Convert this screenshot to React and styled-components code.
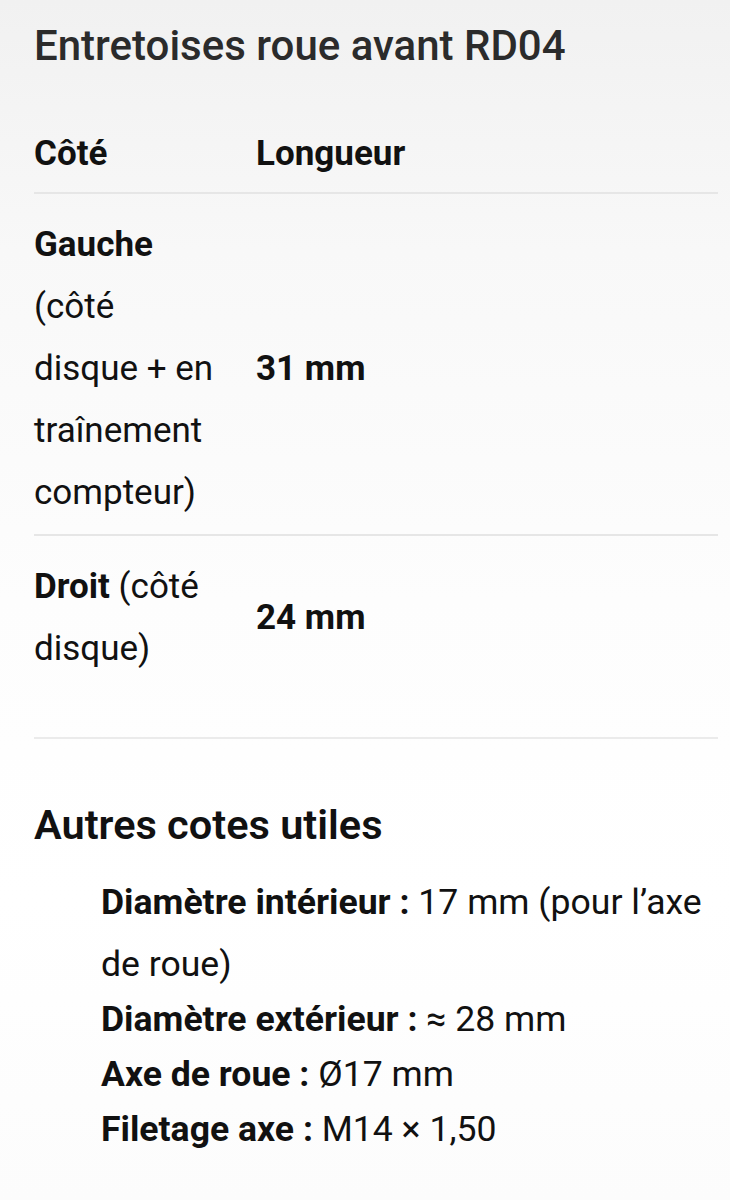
import React from "react";
import styled, { createGlobalStyle } from "styled-components";

const Global = createGlobalStyle`
  html, body { margin: 0; padding: 0; }
  body {
    background: linear-gradient(180deg, #f1f1f1 0px, #f8f8f8 250px, #fdfdfd 600px, #ffffff 900px, #fcfcfc 1200px);
    min-height: 1200px;
    font-family: Roboto, "Noto Sans", sans-serif;
    color: #111;
  }
`;

const Page = styled.main`
  padding: 21px 12px 40px 34px;
`;

const Title = styled.h1`
  margin: 0;
  font-size: 42px;
  line-height: 50px;
  font-weight: 500;
  color: #2b2b2b;
  white-space: nowrap;
`;

const Table = styled.table`
  width: 100%;
  border-collapse: collapse;
  margin-top: 61px;
`;

const HeadCell = styled.th`
  text-align: left;
  font-size: 35px;
  font-weight: 700;
  line-height: 44px;
  padding: 0 0 16px 0;
  border-bottom: 2px solid #e6e6e6;
  width: ${(p) => p.$w || "auto"};
`;

const Row = styled.tr`
  border-bottom: ${(p) => (p.$last ? "none" : "2px solid #e6e6e6")};
`;

const Cell = styled.td`
  font-size: 35px;
  line-height: 62px;
  padding: 20px ${(p) => (p.$first ? "36px" : "20px")} 10px 0;
  vertical-align: middle;
  font-weight: ${(p) => (p.$bold ? 700 : 400)};
`;

const Strong = styled.strong`
  font-weight: 700;
`;

const Divider = styled.hr`
  border: none;
  border-top: 2px solid #ebebeb;
  margin: 47px 0 0 0;
`;

const Heading = styled.h2`
  margin: 61px 0 0 0;
  font-size: 41.5px;
  line-height: 50px;
  font-weight: 600;
  color: #111;
`;

const List = styled.ul`
  list-style: none;
  margin: 21px 0 0 0;
  padding: 0 0 0 67px;
`;

const Item = styled.li`
  font-size: 35.6px;
  line-height: 62px;
  & + & { margin-top: -7px; }
`;

export default function App() {
  return (
    <>
      <Global />
      <Page>
        <Title>Entretoises roue avant RD04</Title>
        <Table>
          <thead>
            <tr>
              <HeadCell $w="222px">Côté</HeadCell>
              <HeadCell>Longueur</HeadCell>
            </tr>
          </thead>
          <tbody>
            <Row>
              <Cell $first>
                <Strong>Gauche</Strong> (côté disque + en traînement compteur)
              </Cell>
              <Cell $bold>31 mm</Cell>
            </Row>
            <Row $last>
              <Cell $first>
                <Strong>Droit</Strong> (côté disque)
              </Cell>
              <Cell $bold>24 mm</Cell>
            </Row>
          </tbody>
        </Table>
        <Divider />
        <Heading>Autres cotes utiles</Heading>
        <List>
          <Item>
            <Strong>Diamètre intérieur :</Strong> 17 mm (pour l’axe de roue)
          </Item>
          <Item>
            <Strong>Diamètre extérieur :</Strong> ≈ 28 mm
          </Item>
          <Item>
            <Strong>Axe de roue :</Strong> Ø17 mm
          </Item>
          <Item>
            <Strong>Filetage axe :</Strong> M14 × 1,50
          </Item>
        </List>
      </Page>
    </>
  );
}
